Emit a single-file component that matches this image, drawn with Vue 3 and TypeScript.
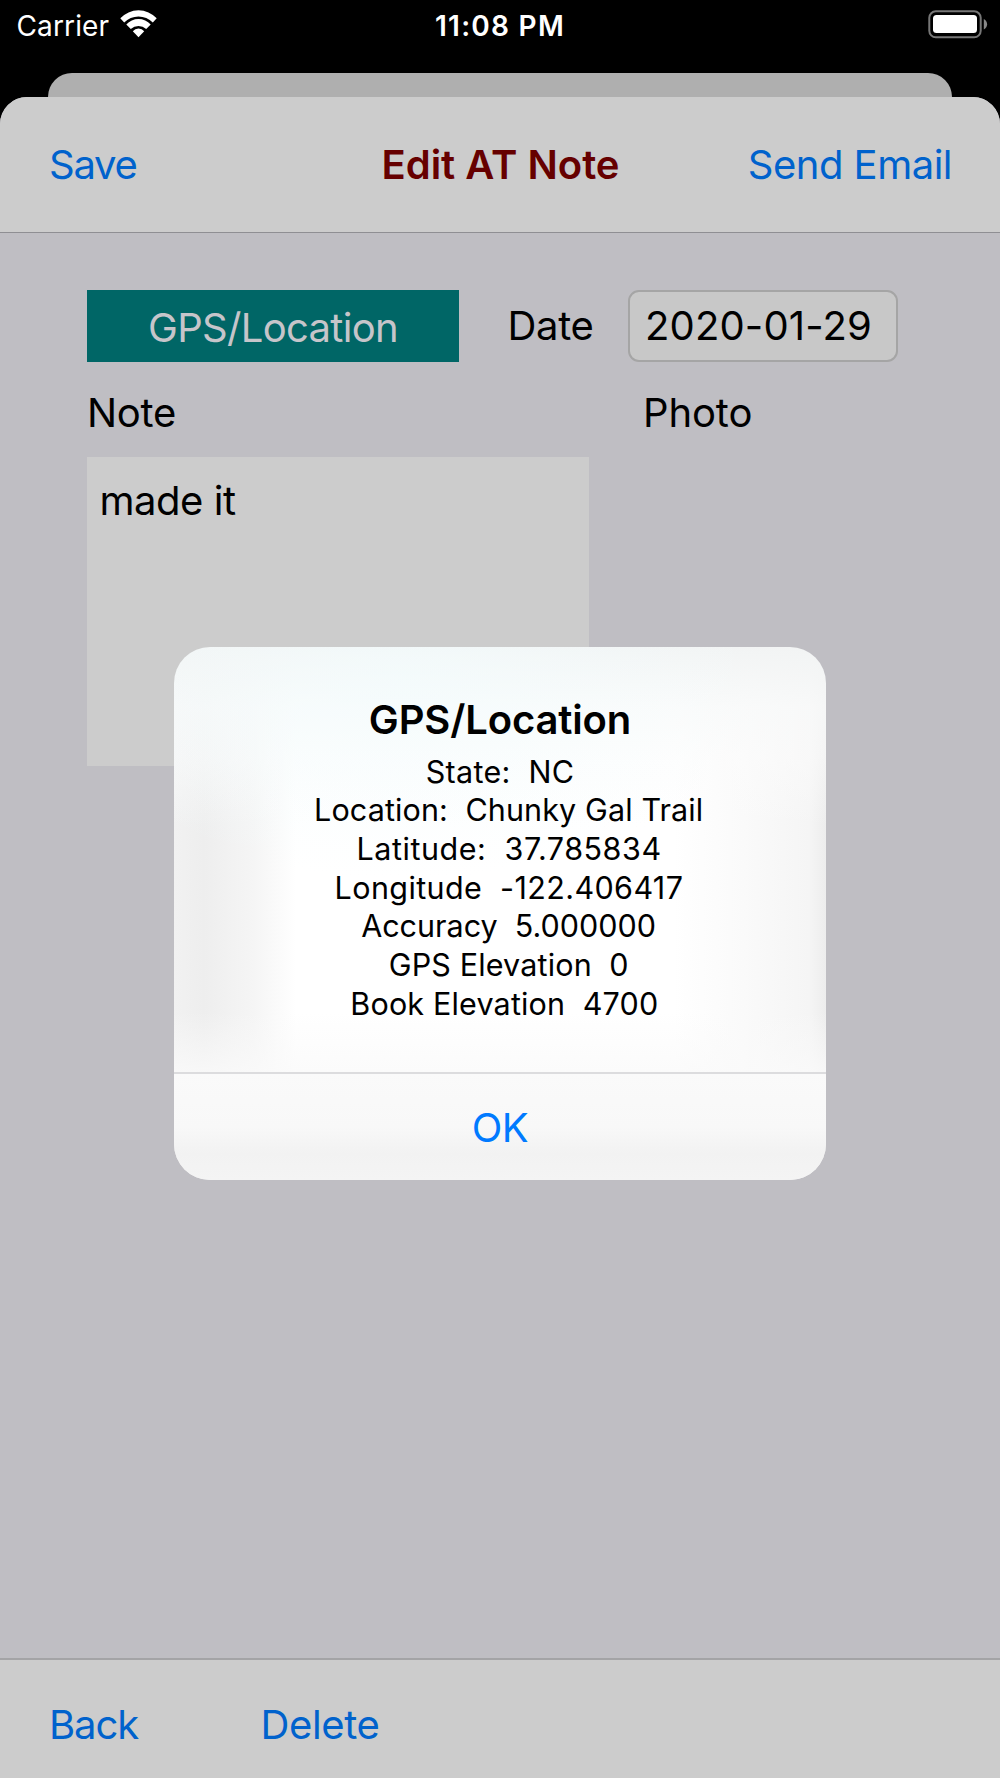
<script setup lang="ts">
interface InfoLine {
  text: string
  spacing: number
}

// The alert message keeps its padding blanks, so lines are rendered preformatted.
const info: InfoLine[] = [
  { text: 'State:  NC', spacing: 0.31 },
  { text: '  Location:  Chunky Gal Trail', spacing: 0.12 },
  { text: '  Latitude:  37.785834', spacing: 0.53 },
  { text: '  Longitude  -122.406417', spacing: 0.38 },
  { text: '  Accuracy  5.000000', spacing: 0 },
  { text: '  GPS Elevation  0', spacing: 0.15 },
  { text: ' Book Elevation  4700', spacing: 0.17 },
]
</script>

<template>
  <div class="screen">
    <header class="status">
      <div class="network">
        <span class="carrier">Carrier</span>
        <svg class="wifi" viewBox="120 10 38 28" width="38" height="28" fill="#fff">
          <path d="M120.3 18.3A24.8 24.8 0 0 1 156.7 18.3L152.8 22.4A20 20 0 0 0 124.2 22.4Z" />
          <path d="M126.3 24.4A16.4 16.4 0 0 1 150.7 24.4L146.2 29A11.6 11.6 0 0 0 130.8 29Z" />
          <path d="M132.8 31.2A7.4 7.4 0 0 1 144.2 31.2L138.5 37.2Z" />
        </svg>
      </div>
      <span class="clock">11:08 PM</span>
      <svg class="battery" viewBox="928 10 60 29" width="60" height="29">
        <rect x="929.3" y="11.3" width="51.4" height="26" rx="6.5" fill="none" stroke="#777" stroke-width="2" />
        <rect x="933" y="15" width="44" height="18" rx="3.5" fill="#fff" />
        <path d="M983.8 19C988.2 21 988.2 27.4 983.8 29.4Z" fill="#888" />
      </svg>
    </header>

    <div class="card-behind"></div>

    <main class="sheet">
      <nav class="navbar">
        <a class="save">Save</a>
        <h1>Edit AT Note</h1>
        <a class="send">Send Email</a>
      </nav>

      <section class="form">
        <div class="row">
          <button class="gps">GPS/Location</button>
          <label class="date-label">Date</label>
          <div class="date-field">2020-01-29</div>
        </div>
        <div class="labels">
          <span class="note-label">Note</span>
          <span class="photo-label">Photo</span>
        </div>
        <div class="note">made it</div>
      </section>

      <footer class="toolbar">
        <a class="back">Back</a>
        <a class="delete">Delete</a>
      </footer>
    </main>

    <div class="alert" role="alertdialog">
      <div class="message">
        <h2>GPS/Location</h2>
        <p v-for="line in info" :key="line.text" :style="{ letterSpacing: line.spacing + 'px' }">{{ line.text }}</p>
      </div>
      <button class="ok">OK</button>
    </div>
  </div>
</template>

<style>
body {
  background: #000;
}
</style>

<style scoped>
.screen {
  position: relative;
  display: flex;
  flex-direction: column;
  width: 1000px;
  height: 1778px;
  overflow: hidden;
  background: #000;
  color: #000;
  font: 400 40px/48px Inter, "Liberation Sans", sans-serif;
}
h1,
h2,
p {
  margin: 0;
}
button {
  border: 0;
  padding: 0;
  font: inherit;
}
.status {
  display: grid;
  grid-template-columns: 1fr auto 1fr;
  height: 72.5px;
  flex: none;
  color: #fff;
  font-size: 28px;
  line-height: 52px;
}
.network {
  display: flex;
  padding-left: 16.5px;
}
.carrier {
  width: 103.5px;
  letter-spacing: 0.13px;
}
.wifi {
  margin-top: 10px;
}
.clock {
  font-weight: 560;
  letter-spacing: 1.25px;
}
.battery {
  justify-self: end;
  margin: 10px 12px 0 0;
}
.card-behind {
  flex: none;
  height: 40px;
  margin: 0 48.5px -15.5px 48px;
  border-radius: 24px 24px 0 0;
  background: #afafaf;
}
.sheet {
  position: relative;
  display: flex;
  flex-direction: column;
  flex: 1;
  overflow: hidden;
  border-radius: 27px 27px 0 0;
  background: #bfbec3;
}
.navbar {
  display: grid;
  grid-template-columns: 1fr auto 1fr;
  align-items: center;
  flex: none;
  box-sizing: border-box;
  height: 136px;
  padding: 0 48px 0 49px;
  background: #ccc;
  border-bottom: 1px solid #8f8f93;
}
.navbar a,
.toolbar a {
  color: #0062cc;
}
.navbar h1 {
  color: #660000;
  font-size: 40px;
  font-weight: 600;
}
.save {
  letter-spacing: -1.25px;
}
.send {
  justify-self: end;
  letter-spacing: -0.51px;
}
.form {
  flex: 1;
  padding: 57px 0 0 87px;
}
.row {
  display: flex;
  height: 72px;
}
.gps {
  width: 372px;
  padding-top: 3px;
  background: #006666;
  color: #c6c5ca;
  letter-spacing: -0.68px;
}
.date-label {
  width: 120px;
  margin-left: 48.5px;
  line-height: 72px;
  letter-spacing: -0.34px;
}
.date-field {
  box-sizing: border-box;
  width: 270px;
  padding-left: 15.5px;
  border: 2px solid #a5a5a5;
  border-radius: 11px;
  background: #c8c8c8;
  line-height: 68px;
  letter-spacing: 0.15px;
}
.labels {
  display: flex;
  margin-top: 27px;
}
.note-label {
  width: 556px;
  letter-spacing: -0.27px;
}
.photo-label {
  letter-spacing: -0.12px;
}
.note {
  box-sizing: border-box;
  width: 502px;
  height: 309px;
  margin-top: 20px;
  padding: 20px 12.5px;
  background: #ccc;
  letter-spacing: -0.46px;
}
.toolbar {
  display: flex;
  flex: none;
  box-sizing: border-box;
  height: 120px;
  padding: 41px 49px 0;
  background: #ccc;
  border-top: 2px solid #a4a4a6;
}
.back {
  width: 211.5px;
  letter-spacing: -1.1px;
}
.delete {
  letter-spacing: -0.38px;
}
.alert {
  position: absolute;
  top: 647px;
  left: 174px;
  display: flex;
  flex-direction: column;
  width: 652px;
  height: 533px;
  overflow: hidden;
  border-radius: 36px;
  background:
    radial-gradient(ellipse 360px 200px at 35% 6%, rgba(243, 252, 253, 0.7), rgba(248, 254, 254, 0) 100%),
    linear-gradient(to bottom, #f2f4f4 0, rgba(249, 250, 250, 0.75) 60px, rgba(252, 252, 252, 0.5) 110px, rgba(255, 255, 255, 0) 180px),
    linear-gradient(to right, #f1f1f1 0, #eee 30px, #f5f5f5 80px, #fff 122px, #fff 500px, #fafafa 570px, #f5f5f5 635px, #ededed 652px);
}
.message {
  flex: 1;
  padding-top: 49px;
  text-align: center;
  white-space: pre;
  font-size: 30.5px;
  line-height: 38.67px;
  background: linear-gradient(to top, rgba(250, 250, 250, 0.8) 0, rgba(255, 255, 255, 0) 60px);
}
.message h2 {
  margin-bottom: 8.8px;
  font-size: 40px;
  font-weight: 600;
  line-height: 48px;
  letter-spacing: -0.14px;
}
.ok {
  flex: none;
  box-sizing: border-box;
  height: 108px;
  padding-top: 2px;
  border-top: 2px solid #dcdcde;
  background: linear-gradient(to bottom, #fafafa, #f8f8f8 50%, #f2f2f2 75%, #f4f4f4);
  color: #007aff;
  letter-spacing: -0.59px;
}
</style>
